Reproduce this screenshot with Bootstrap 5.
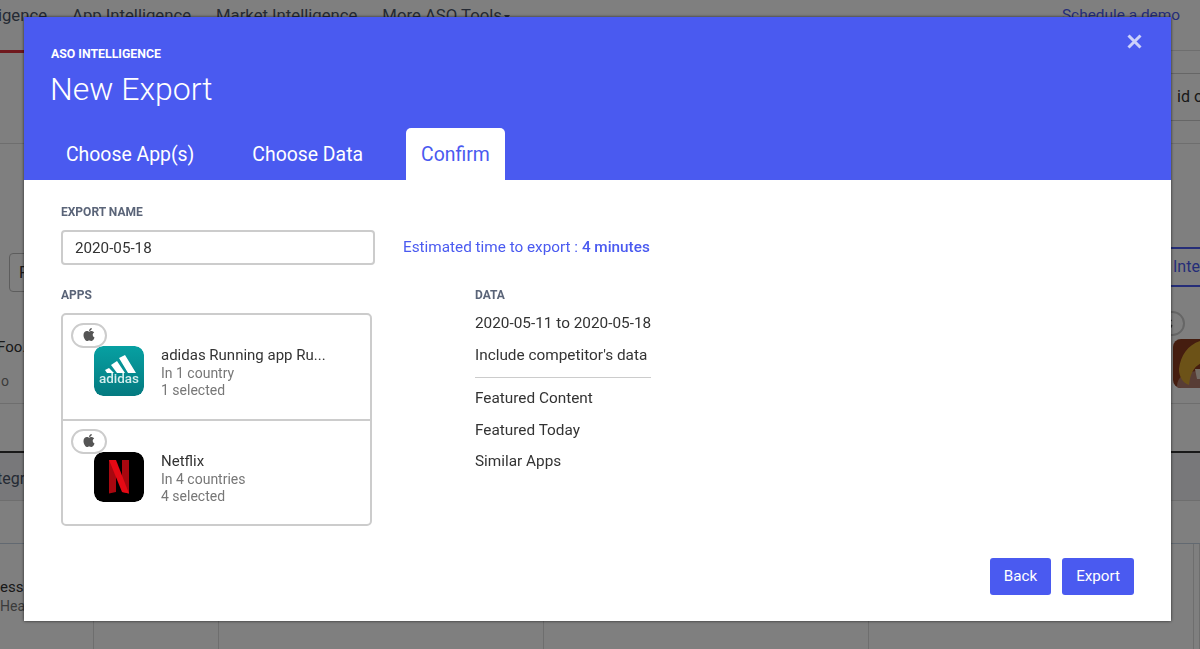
<!DOCTYPE html>
<html lang="en">
<head>
  <meta charset="UTF-8" />
  <meta name="viewport" content="width=device-width, initial-scale=1.0"/>
  <title>New Export</title>
  <link href="https://cdn.jsdelivr.net/npm/bootstrap@5.3.0/dist/css/bootstrap.min.css" rel="stylesheet"/>
  <style>
    body {
      font-family: Roboto, "Liberation Sans", sans-serif;
      color: #333;
      height: 649px;
      overflow: hidden;
      background: #fff;
    }

    /* page behind the modal */
    .under-nav { height: 51px; border-bottom: 1px solid #ddd; gap: 25px; font-size: 16.7px; color: #4a5468; padding-top: 3px; white-space: nowrap; }
    .under-nav .dropdown-toggle::after { border-width: 4px 3.500px 0; margin-left: 2px; vertical-align: 2px; }
    .under-first { width: 47px; height: 50px; flex: none; overflow: hidden; justify-content: flex-end; position: relative; }
    .under-first-line { width: 47px; height: 3px; background: #e0323c; position: absolute; left: 0; bottom: 0; }
    .under-demo { color: #4a5bf0; margin-left: auto; margin-right: 20px; font-size: 15.4px; padding-top: 1px; }
    .under-search { height: 93px; border-bottom: 1px solid #ddd; padding-top: 22px; }
    .under-input { width: 90px; height: 48px; border: 1px solid #ccc; border-radius: 4px; margin-right: -20px; padding: 11px 0 0 46px; font-size: 16px; white-space: nowrap; overflow: hidden; }
    .under-filters { height: 260px; border-bottom: 1px solid #ddd; padding-top: 109px; }
    .under-select { width: 40px; height: 39px; margin-left: 9px; border: 1px solid #bbb; border-radius: 4px; padding: 7px 0 0 9px; }
    .under-btn { width: 60px; height: 40px; border: 2px solid #4a5bf0; border-width: 2px 0; color: #4a5bf0; padding: 6px 0 0 33px; margin-top: -6px; white-space: nowrap; overflow: hidden; }
    .under-cards { margin-top: 21px; }
    .under-text { font-size: 15px; padding-top: 17px; line-height: 34px; white-space: nowrap; width: 27px; margin-left: -3px; overflow: hidden; }
    .under-side { position: relative; width: 40px; margin-right: -13px; }
    .under-pill { position: absolute; left: -24px; top: -2px; width: 36px; height: 25px; border: 2px solid #ccc; border-radius: 13px; background: #fff; text-align: center; line-height: 17px; }
    .under-game { margin-top: 26px; border-radius: 8px; display: block; position: relative; }
    .under-gap { height: 49px; border-bottom: 2px solid #333; }
    .under-tabs { height: 48px; background: #f0f1f4; border-bottom: 1px solid #ddd; padding-top: 14px; color: #4a5468; overflow: hidden; text-indent: -3px; }
    .under-gap2 { height: 43px; border-bottom: 1px solid #c5d3e3; }
    .under-cols { display: grid; grid-template-columns: 94px 125px 325px 325px 325px 6px; height: 105px; }
    .under-cols > div { border-right: 1px solid #ddd; font-size: 15px; padding-top: 34px; line-height: 19px; white-space: nowrap; overflow: hidden; }
    .under-sub { color: #777; font-size: 14px; }

    /* modal */
    .export-dialog { margin: 17px 0 0 24px; width: 1147px; max-width: none; }
    .export-content { height: 604px; border: 0; border-radius: 0; box-shadow: 0 0 3px rgba(0, 0, 0, .7); }
    .export-head { background: #4a5af0; height: 163px; padding: 30px 0 0 27px; position: relative; color: #fff; flex: none; }
    .export-kicker { font-size: 12.3px; font-weight: 700; line-height: 14px; }
    .export-title { font-size: 32px; font-weight: 300; line-height: 40px; margin: 8px 0 0 -1px; }
    .export-x { position: absolute; top: 17px; right: 29px; opacity: .72; display: block; background: none; border: 0; padding: 0; line-height: 0; }
    .export-tabs { gap: 28px; margin-top: 19px; border: 0; }
    .export-tabs .nav-link { font-size: 19.4px; line-height: 23px; height: 53px; padding: 15px; color: #fff; border: 0; border-radius: 5px 5px 0 0; margin: 0; background: none; }
    .export-tabs .nav-link.active { color: #4a5af0; background: #fff; }
    .export-body { padding: 25px 36px 0 37px; flex: 1 1 auto; }
    .field-label { font-size: 12px; font-weight: 700; line-height: 14px; color: #5a6478; }
    .name-input { width: 314px; height: 35px; border: 2px solid #ccc; border-radius: 4px; padding: 0 12px; font-size: 15.2px; color: #333; font-family: inherit; }
    .name-row { margin-top: 11px; gap: 28px; }
    .estimate { color: #4a5af0; font-size: 15.3px; }
    .estimate b { font-weight: 500; }
    .apps-col { width: 414px; flex: none; }
    .data-col { width: 176px; font-size: 15.35px; white-space: nowrap; }
    .data-first { margin-top: 6px !important; }
    .data-col p { margin: 0; line-height: 31.5px; }
    .data-col hr { margin: 6px 0 5px; border-color: #ccc; opacity: 1; }
    .export-columns { margin-top: 23px; }
    .app-box { width: 311px; height: 213px; border: 2px solid #ccc; border-radius: 5px; margin-top: 11px; }
    .app-row { height: 104px; position: relative; padding: 31px 0 0 31px; gap: 17px; }
    .app-row + .app-row { border-top: 2px solid #ccc; height: 107px; }
    .store-pill { position: absolute; left: 8px; top: 8px; width: 36px; height: 25px; border: 2px solid #ccc; border-radius: 13px; background: #fff; text-align: center; line-height: 17px; }
    .app-icon { width: 50px; height: 50px; border-radius: 9px; flex: none; display: block; position: relative; }
    .app-name { font-size: 15px; line-height: 19px; color: #333; }
    .app-meta { font-size: 14px; line-height: 17px; color: #777; }
    .export-foot { gap: 11px; position: absolute; right: 37px; bottom: 26px; }
    .export-btn { background: #4a5af0; color: #fff; border: 0; border-radius: 3px; height: 37px; padding: 0 14px; font-size: 15.2px; }
  </style>
</head>
<body>
  <div>
    <div class="under-nav d-flex">
      <div class="under-first d-flex">ASO Intelligence<span class="under-first-line"></span></div>
      <span>App Intelligence</span>
      <span>Market Intelligence</span>
      <span class="dropdown-toggle">More ASO Tools</span>
      <span class="under-demo">Schedule a demo</span>
    </div>
    <div class="under-search d-flex justify-content-end">
      <div class="under-input">id or</div>
    </div>
    <div class="under-filters">
      <div class="d-flex justify-content-between">
        <div class="under-select">F</div>
        <div class="under-btn">Integrations</div>
      </div>
      <div class="under-cards d-flex justify-content-between">
        <div class="under-text">Foo.<br><span class="under-sub ms-1">o</span></div>
        <div class="under-side">
          <span class="under-pill">
            <svg width="12" height="15" viewBox="0 0 384 512"><path fill="#555" d="M318.7 268.7c-.2-36.7 16.4-64.4 50-84.8-18.8-26.9-47.2-41.7-84.7-44.6-35.5-2.8-74.3 20.7-88.5 20.7-15 0-49.4-19.7-76.4-19.7C63.3 141.2 4 184.8 4 273.5q0 39.3 14.4 81.2c12.8 36.7 59 126.7 107.2 125.2 25.2-.6 43-17.9 75.8-17.9 31.8 0 48.3 17.9 76.4 17.9 48.6-.7 90.4-82.5 102.6-119.3-65.2-30.7-61.7-90-61.7-91.9zm-56.6-164.2c27.3-32.4 24.8-61.9 24-72.5-24.1 1.4-52 16.4-67.9 34.9-17.5 19.8-27.8 44.3-25.6 71.9 26.1 2 49.9-11.4 69.5-34.3z"/></svg>
          </span>
          <svg class="under-game" viewBox="0 0 40 49" width="40" height="49">
            <rect width="40" height="49" fill="#8a3a1e"/>
            <path d="M4 49c0-10 4-18 36-18v18z" fill="#b07a6a"/>
            <path d="M6 30C8 12 20 0 40 0v22c-14 0-22 6-24 24-6-2-10-8-10-16z" fill="#d9a52f"/>
            <path d="M22 30h18v10H24z" fill="#e6d8c8"/>
          </svg>
        </div>
      </div>
    </div>
    <div class="under-gap"></div>
    <div class="under-tabs">tegrations</div>
    <div class="under-gap2"></div>
    <div class="under-cols">
      <div>ess<br><span class="under-sub">Health</span></div>
      <div></div>
      <div></div>
      <div></div>
      <div></div>
      <div></div>
    </div>
  </div>

  <div class="modal-backdrop show"></div>

  <div class="modal d-block">
    <div class="modal-dialog export-dialog">
      <div class="modal-content export-content">
        <div class="export-head">
          <button type="button" class="export-x" aria-label="Close">
            <svg width="15" height="15" viewBox="0 0 15 15"><path d="M1.5 1.5l12 12M13.5 1.5l-12 12" stroke="#fff" stroke-width="3"/></svg>
          </button>
          <div class="export-kicker">ASO INTELLIGENCE</div>
          <h1 class="export-title">New Export</h1>
          <ul class="nav export-tabs">
            <li class="nav-item"><a class="nav-link" href="#">Choose App(s)</a></li>
            <li class="nav-item"><a class="nav-link" href="#">Choose Data</a></li>
            <li class="nav-item"><a class="nav-link active" href="#">Confirm</a></li>
          </ul>
        </div>

        <div class="export-body">
          <div class="field-label">EXPORT NAME</div>
          <div class="name-row d-flex align-items-center">
            <input class="name-input" type="text" value="2020-05-18"/>
            <div class="estimate">Estimated time to export : <b>4 minutes</b></div>
          </div>

          <div class="export-columns d-flex">
            <div class="apps-col">
              <div class="field-label">APPS</div>
              <div class="app-box">
                <div class="app-row d-flex">
                  <span class="store-pill">
                    <svg width="12" height="15" viewBox="0 0 384 512"><path fill="#555" d="M318.7 268.7c-.2-36.7 16.4-64.4 50-84.8-18.8-26.9-47.2-41.7-84.7-44.6-35.5-2.8-74.3 20.7-88.5 20.7-15 0-49.4-19.7-76.4-19.7C63.3 141.2 4 184.8 4 273.5q0 39.3 14.4 81.2c12.8 36.7 59 126.7 107.2 125.2 25.2-.6 43-17.9 75.8-17.9 31.8 0 48.3 17.9 76.4 17.9 48.6-.7 90.4-82.5 102.6-119.3-65.2-30.7-61.7-90-61.7-91.9zm-56.6-164.2c27.3-32.4 24.8-61.9 24-72.5-24.1 1.4-52 16.4-67.9 34.9-17.5 19.8-27.8 44.3-25.6 71.9 26.1 2 49.9-11.4 69.5-34.3z"/></svg>
                  </span>
                  <svg class="app-icon" viewBox="0 0 50 50">
                    <defs><linearGradient id="adi" x1="0" y1="0" x2="0" y2="1"><stop offset="0" stop-color="#07a0a2"/><stop offset="1" stop-color="#047a80"/></linearGradient></defs>
                    <rect width="50" height="50" rx="9" fill="url(#adi)"/>
                    <path d="M11 24l4-2 5 5h-7zM17 19l6-4 8 12h-8zM25 12l6-3 11 18h-8z" fill="#fff"/>
                    <text x="25" y="36.500" text-anchor="middle" font-family="Roboto, sans-serif" font-weight="500" font-size="12" fill="#d5eeee" textLength="40" lengthAdjust="spacingAndGlyphs">adidas</text>
                  </svg>
                  <div>
                    <div class="app-name">adidas Running app Ru...</div>
                    <div class="app-meta">In 1 country</div>
                    <div class="app-meta">1 selected</div>
                  </div>
                </div>
                <div class="app-row d-flex">
                  <span class="store-pill">
                    <svg width="12" height="15" viewBox="0 0 384 512"><path fill="#555" d="M318.7 268.7c-.2-36.7 16.4-64.4 50-84.8-18.8-26.9-47.2-41.7-84.7-44.6-35.5-2.8-74.3 20.7-88.5 20.7-15 0-49.4-19.7-76.4-19.7C63.3 141.2 4 184.8 4 273.5q0 39.3 14.4 81.2c12.8 36.7 59 126.7 107.2 125.2 25.2-.6 43-17.9 75.8-17.9 31.8 0 48.3 17.9 76.4 17.9 48.6-.7 90.4-82.5 102.6-119.3-65.2-30.7-61.7-90-61.7-91.9zm-56.6-164.2c27.3-32.4 24.8-61.9 24-72.5-24.1 1.4-52 16.4-67.9 34.9-17.5 19.8-27.8 44.3-25.6 71.9 26.1 2 49.9-11.4 69.5-34.3z"/></svg>
                  </span>
                  <svg class="app-icon" viewBox="0 0 50 50">
                    <rect width="50" height="50" rx="9" fill="#000"/>
                    <path d="M15 8h7v32l-7 1.500z" fill="#a8070f"/>
                    <path d="M28 8h7v33.500L28 40z" fill="#a8070f"/>
                    <path d="M15 8h7l13 33.500-7-1.500z" fill="#e50914"/>
                  </svg>
                  <div>
                    <div class="app-name">Netflix</div>
                    <div class="app-meta">In 4 countries</div>
                    <div class="app-meta">4 selected</div>
                  </div>
                </div>
              </div>
            </div>
            <div class="data-col">
              <div class="field-label">DATA</div>
              <p class="data-first">2020-05-11 to 2020-05-18</p>
              <p>Include competitor's data</p>
              <hr/>
              <p>Featured Content</p>
              <p>Featured Today</p>
              <p>Similar Apps</p>
            </div>
          </div>
        </div>

        <div class="export-foot d-flex">
          <button type="button" class="export-btn">Back</button>
          <button type="button" class="export-btn">Export</button>
        </div>
      </div>
    </div>
  </div>
</body>
</html>
